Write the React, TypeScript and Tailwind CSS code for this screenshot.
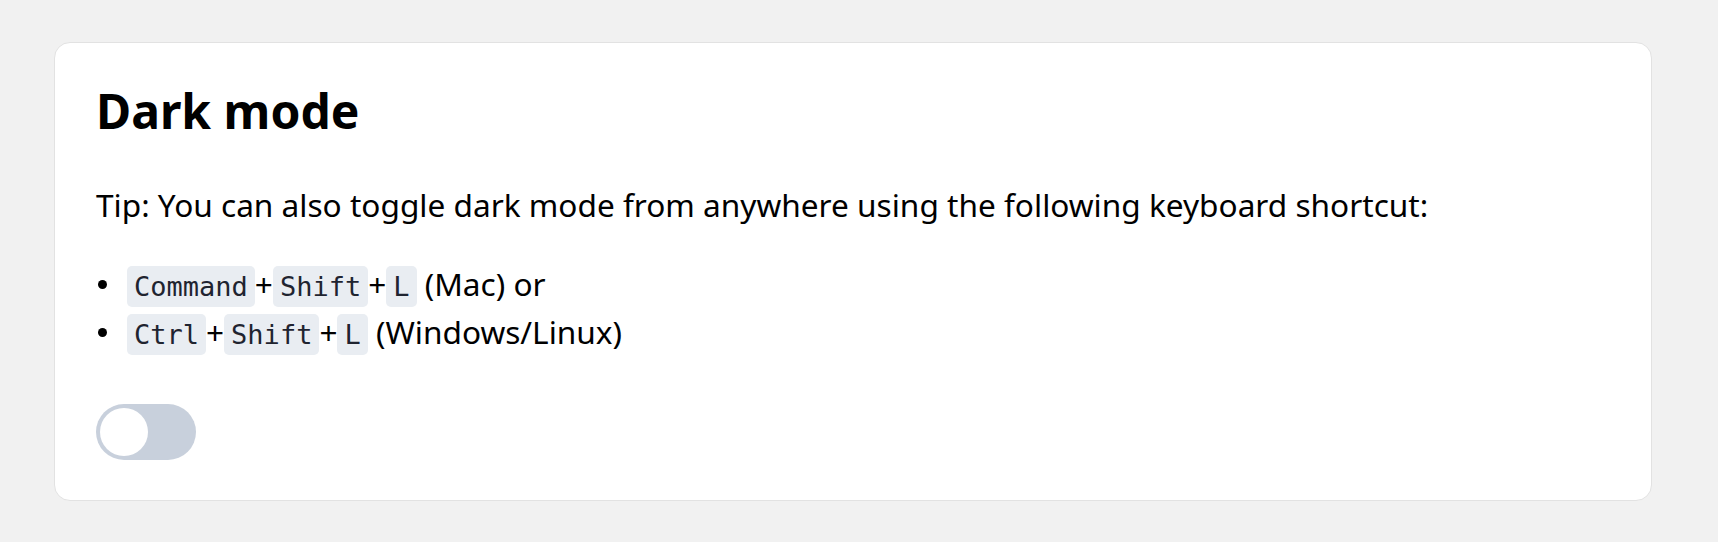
import { useState } from 'react';

const Key = ({ children }: { children: string }) => (
  <code className="rounded-[5px] bg-[#e9edf2] px-[7px] py-[5px] font-['DejaVu_Sans_Mono',monospace] text-[27px] leading-none text-[#1f2430]">
    {children}
  </code>
);

const Bullet = ({ children }: { children: React.ReactNode }) => (
  <li className="flex h-[48px] items-center">
    <span className="ml-[2px] mr-[20px] h-[9px] w-[9px] shrink-0 rounded-full bg-black" aria-hidden="true" />
    <span>{children}</span>
  </li>
);

export default function App() {
  const [dark, setDark] = useState(false);

  return (
    <div className="h-[542px] w-full bg-[#f1f1f1] pl-[54px] pt-[42px] font-['Noto_Sans',sans-serif] text-black">
      <section className="w-[1598px] rounded-[16px] border border-[#e2e2e2] bg-white px-[41px] pb-[40px] pt-[45px]">
        <h1 className="text-[48px] font-bold leading-[46px]">Dark mode</h1>
        <p className="mt-[47px] text-[31.6px] leading-[48px]">
          Tip: You can also toggle dark mode from anywhere using the following keyboard shortcut:
        </p>
        <ul className="mt-[31px] text-[31.6px] leading-[48px]">
          <Bullet>
            <Key>Command</Key>+<Key>Shift</Key>+<Key>L</Key> (Mac) or
          </Bullet>
          <Bullet>
            <Key>Ctrl</Key>+<Key>Shift</Key>+<Key>L</Key> (Windows/Linux)
          </Bullet>
        </ul>
        <button
          type="button"
          role="switch"
          aria-checked={dark}
          onClick={() => setDark((v) => !v)}
          className={`mt-[48px] flex h-[56px] w-[100px] items-center rounded-full p-[4px] ${
            dark ? 'bg-[#3b82f6]' : 'bg-[#c8d0dc]'
          }`}
        >
          <span
            className={`h-[48px] w-[48px] rounded-full bg-white transition-transform ${
              dark ? 'translate-x-[44px]' : 'translate-x-0'
            }`}
          />
        </button>
      </section>
    </div>
  );
}
